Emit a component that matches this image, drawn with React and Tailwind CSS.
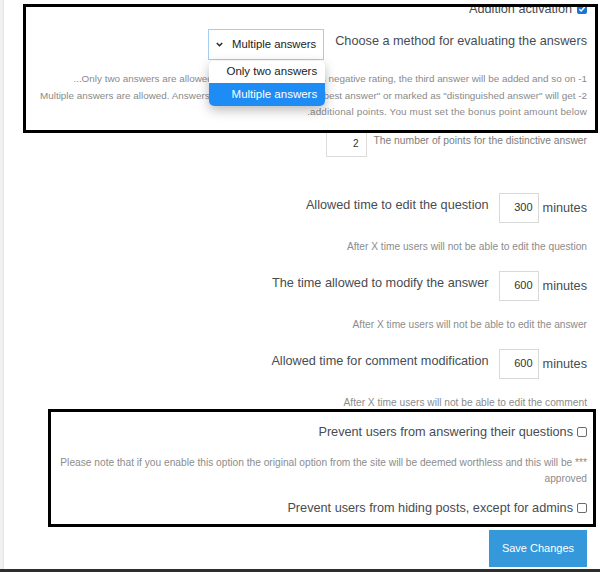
import React from 'react';

// settings panel (right aligned, translated from an RTL page)
const labelCls = "text-[12.7px] leading-[18px] text-[#474c52] whitespace-nowrap";
const helpCls = "text-[10.2px] leading-[14px] text-[#8c8c8c] whitespace-nowrap text-right";

const Checkbox = ({ checked }) => {
    if (checked) {
        return (
            <span className="w-[10px] h-[10px] rounded-[2px] bg-[#1a73d9] flex items-center justify-center">
                <svg width="8" height="8" viewBox="0 0 8 8">
                    <polyline points="1.3,4.2 3.2,6 6.7,2" fill="none" stroke="white" strokeWidth="1.5" />
                </svg>
            </span>
        );
    }
    return <span className="w-[10px] h-[10px] rounded-[2px] border border-[#6b6b6b] bg-white" />;
};

const TimeRow = ({ label, value }) => (
    <div className="flex items-start">
        <span className={labelCls + " mt-[3px] mr-[10px]"}>{label}</span>
        <div className="w-[40px] h-[30px] border border-[#d9d9d9] flex items-center justify-end pr-[5px] text-[11px] text-[#333]">
            {value}
        </div>
        <span className={labelCls + " self-center ml-[4px] pt-[1px]"}>minutes</span>
    </div>
);

const App = () => {
    return (
        <div className="relative w-[600px] h-[572px] overflow-hidden bg-white flex flex-col font-['Liberation_Sans',Arial,sans-serif]">
            <div className="flex-1 flex">
                <div className="w-[4px] bg-[#eef0f1] border-r border-[#e3e6e8]" />

                <div className="flex-1 flex flex-col items-end pr-[13px]">
                    {/* Addition activation */}
                    <div className="h-[18px] flex items-center gap-[5px]">
                        <span className={labelCls}>Addition activation</span>
                        <Checkbox checked />
                    </div>

                    {/* evaluation method */}
                    <div className="mt-[11px] flex items-start gap-[11px]">
                        <div className="relative">
                            <div className="w-[116px] h-[31px] border border-[#a5cdee] flex items-center justify-between pl-[7px] pr-[7px] text-[11.3px] text-[#222]">
                                <svg width="7" height="5" viewBox="0 0 7 5">
                                    <polyline points="0.8,1 3.5,3.8 6.2,1" fill="none" stroke="#222" strokeWidth="1.4" />
                                </svg>
                                <span>Multiple answers</span>
                            </div>
                            <div className="absolute left-[1px] top-[32px] w-[116px] bg-white rounded-[5px] overflow-hidden shadow-[0_4px_12px_rgba(0,0,0,0.28)] z-10 text-[11.5px]">
                                <div className="h-[22px] flex items-center justify-end pr-[8px] text-[#222]">Only two answers</div>
                                <div className="h-[23px] flex items-center justify-end pr-[8px] bg-[#1e8cf5] text-white">Multiple answers</div>
                            </div>
                        </div>
                        <span className={labelCls + " mt-[3px]"}>Choose a method for evaluating the answers</span>
                    </div>

                    <div className="mt-[11px] text-[9.9px] leading-[16.5px] text-[#8a8a8a] text-right whitespace-nowrap">
                        <div>...Only two answers are allowed. The second answer gets negative rating, the third answer will be added and so on -1</div>
                        <div>Multiple answers are allowed. Answers that were chosen as "the best answer" or marked as "distinguished answer" will get -2</div>
                        <div className="tracking-[0.15px]">.additional points. You must set the bonus point amount below</div>
                    </div>

                    {/* bonus points */}
                    <div className="mt-[10px] flex items-start gap-[7px]">
                        <div className="w-[41px] h-[26px] border border-[#dcdcdc] flex items-center justify-end pr-[7px] text-[10px] text-[#333]">2</div>
                        <span className="text-[10.3px] leading-[14px] mt-[3px] text-[#7d7d7d] whitespace-nowrap">The number of points for the distinctive answer</span>
                    </div>

                    <div className="mt-[36px]">
                        <TimeRow label="Allowed time to edit the question" value="300" />
                    </div>
                    <div className={helpCls + " mt-[17px]"}>After X time users will not be able to edit the question</div>

                    <div className="mt-[17px]">
                        <TimeRow label="The time allowed to modify the answer" value="600" />
                    </div>
                    <div className={helpCls + " mt-[17px]"}>After X time users will not be able to edit the answer</div>

                    <div className="mt-[17px]">
                        <TimeRow label="Allowed time for comment modification" value="600" />
                    </div>
                    <div className={helpCls + " mt-[17px]"}>After X time users will not be able to edit the comment</div>

                    {/* restrictions */}
                    <div className="mt-[13px] h-[18px] flex items-center gap-[4px]">
                        <span className={labelCls}>Prevent users from answering their questions</span>
                        <Checkbox />
                    </div>
                    <div className="mt-[14px] text-[10.2px] leading-[16px] text-[#8c8c8c] text-right whitespace-nowrap">
                        <div>Please note that if you enable this option the original option from the site will be deemed worthless and this will be ***</div>
                        <div>approved</div>
                    </div>
                    <div className="mt-[12px] h-[18px] flex items-center gap-[4px]">
                        <span className={labelCls}>Prevent users from hiding posts, except for admins</span>
                        <Checkbox />
                    </div>

                    <button className="mt-[13px] w-[98px] h-[37px] bg-[#3498db] text-white text-[11px]">
                        Save Changes
                    </button>
                </div>
            </div>
            <div className="h-[3px] bg-[#2e2e2e]" />

            {/* annotation frames drawn over the screenshot */}
            <div className="absolute left-[23px] top-[4px] w-[575px] h-[129px] border-[3px] border-black pointer-events-none" />
            <div className="absolute left-[48px] top-[409px] w-[548px] h-[118px] border-[3px] border-black pointer-events-none" />
        </div>
    );
};

export default App;
